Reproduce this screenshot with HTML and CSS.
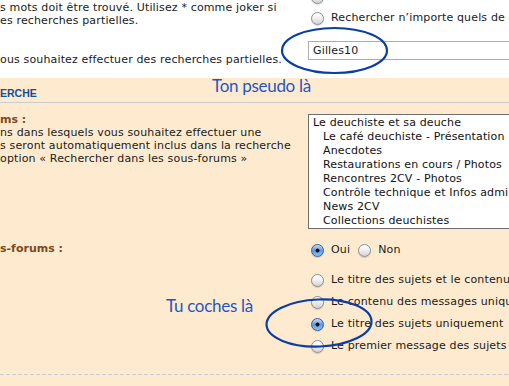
FILE: index.html
```html
<!doctype html>
<html>
<head>
<meta charset="utf-8">
<title>Recherche</title>
<link rel="stylesheet" href="styles.css">
</head>

<body>
<div class="page">

    <div class="panel panel-white">
        <div class="row row-words">
            <div class="term">
                <span class="explain">s mots doit être trouvé. Utilisez * comme joker si<br>es recherches partielles.</span>
            </div>
            <div class="def def-top">
                <label class="choice"><input type="radio" name="terms"></label>
                <label class="choice"><input type="radio" name="terms"> Rechercher n’importe quels de ces termes</label>
            </div>
        </div>
        <div class="row row-author">
            <div class="term term-author">
                <span class="explain">ous souhaitez effectuer des recherches partielles.</span>
            </div>
            <div class="def">
                <input class="inputbox" type="text" value="Gilles10">
            </div>
        </div>
    </div>

    <div class="panel panel-peach">
        <h3>ERCHE</h3>

        <div class="row row-forums">
            <div class="term">
                <label class="label">ms :</label><br>
                <span class="explain">ns dans lesquels vous souhaitez effectuer une<br>s seront automatiquement inclus dans la recherche<br>option « Rechercher dans les sous-forums »</span>
            </div>
            <div class="def">
                <div class="forum-list">
                    <div class="forum">Le deuchiste et sa deuche</div>
                    <div class="forum sub">Le café deuchiste - Présentation</div>
                    <div class="forum sub">Anecdotes</div>
                    <div class="forum sub">Restaurations en cours / Photos</div>
                    <div class="forum sub">Rencontres 2CV - Photos</div>
                    <div class="forum sub">Contrôle technique et Infos administratives</div>
                    <div class="forum sub">News 2CV</div>
                    <div class="forum sub">Collections deuchistes</div>
                </div>
            </div>
        </div>

        <div class="row row-subforums">
            <div class="term term-sub">
                <label class="label">s-forums :</label>
            </div>
            <div class="def def-inline">
                <label class="choice"><input type="radio" name="sc" checked> Oui</label>
                <label class="choice"><input type="radio" name="sc"> Non</label>
            </div>
        </div>

        <div class="row row-fields">
            <div class="term"></div>
            <div class="def">
                <label class="choice"><input type="radio" name="sf"> Le titre des sujets et le contenu des messages</label>
                <label class="choice"><input type="radio" name="sf"> Le contenu des messages uniquement</label>
                <label class="choice"><input type="radio" name="sf" checked> Le titre des sujets uniquement</label>
                <label class="choice"><input type="radio" name="sf"> Le premier message des sujets uniquement</label>
            </div>
        </div>

        <div class="dashed"></div>
    </div>

    <!-- annotations -->
    <div class="note note-pseudo">Ton pseudo là</div>
    <div class="note note-check">Tu coches là</div>
    <svg class="marks" width="509" height="386" viewBox="0 0 509 386">
        <ellipse cx="334.5" cy="50.5" rx="52.5" ry="22.5" />
        <ellipse cx="319" cy="323" rx="52.5" ry="23.5" transform="rotate(-2 319 323)" />
    </svg>

</div>
</body>
</html>
```

FILE: styles.css
```css
html,body { padding:0; margin:0; overflow:hidden;}
body { font-family:"DejaVu Sans", Verdana, sans-serif; font-size:11px; line-height:13px; letter-spacing:0.15px; color:#1a1a1a;}

.page { position:relative; width:509px; height:386px; overflow:hidden; background:#feebcf;}

.panel-white { background:#fff; height:78px;}
.panel-peach { background:#feebcf; padding-top:9px;}

.row { display:flex; align-items:flex-start; white-space:nowrap;}
.term { width:308px; flex:none;}
.def { flex:none;}

.row-words { height:40px;}
.row-words .term { padding-top:1px;}
.def-top { margin-top:-15px;}
.def-top .choice:first-child { height:21px;}
.term-author { padding-top:13px;}

.inputbox { display:block; box-sizing:border-box; width:230px; height:19px; margin:1px 0 0 0; padding:0 4px; border:1px solid #adadad; font-family:"DejaVu Sans", Verdana, sans-serif; font-size:11px; letter-spacing:0.15px; color:#1a1a1a; background:#fff;}

h3 { margin:0; padding-bottom:2px; font-family:"Liberation Sans", Arial, sans-serif; font-size:10.5px; line-height:13px; font-weight:bold; letter-spacing:0; text-transform:uppercase; color:#115098; border-bottom:1px solid #c9cdd3;}

.label { font-weight:bold; letter-spacing:0; color:#7b4a22;}

.row-forums { margin-top:10px;}
.forum-list { width:240px; margin-top:1px; padding-top:1px; border:1px solid #6e6e6e; background:#fff; color:#111;}
.forum { padding-left:4px; line-height:14px; height:14px;}
.forum.sub { padding-left:14px;}

.row-subforums { margin-top:9px;}
.term-sub { padding-top:4px;}
.def-inline { display:flex;}
.def-inline .choice { margin-right:5px;}

.row-fields { margin-top:8px;}

.choice { display:flex; align-items:center; height:22px; color:#1a1a1a;}
.choice input { -webkit-appearance:none; appearance:none; width:13px; height:13px; margin:3px 7px 0 3px; flex:none; border:1px solid #8e8e8e; border-radius:50%; box-sizing:border-box;
    background:linear-gradient(#ffffff, #f1f1f1 45%, #d2d2d2); box-shadow:0 1px 1px rgba(0,0,0,0.15);}
.choice input:checked { border-color:#3d5f95;
    background:radial-gradient(circle, #0d0d0d 0 1.7px, transparent 2.3px), linear-gradient(#c6ddf6, #5d9ae2 50%, #8cc1f4);}

.dashed { height:1px; margin-top:18px; background:repeating-linear-gradient(90deg, #c7ced8 0 4px, transparent 4px 6px);}

.note { position:absolute; font-family:Lato, "Open Sans", sans-serif; font-size:17px; line-height:17px; letter-spacing:-0.3px; color:#1e57c2; white-space:nowrap;}
.note-pseudo { left:212px; top:77px;}
.note-check { left:166px; top:297px;}

.marks { position:absolute; left:0; top:0; pointer-events:none;}
.marks ellipse { fill:none; stroke:#0c3da5; stroke-width:2.2;}
```
